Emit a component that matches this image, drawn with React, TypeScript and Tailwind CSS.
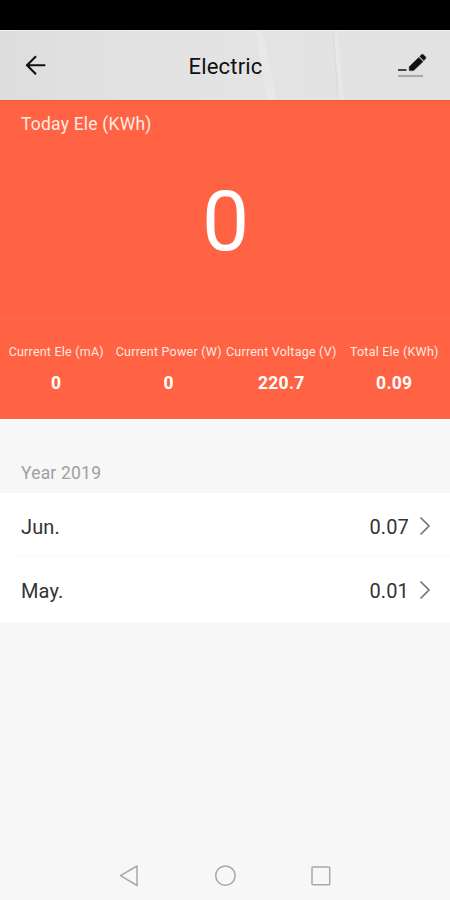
import React from 'react';

const stats = [
  { label: 'Current Ele (mA)', value: '0' },
  { label: 'Current Power (W)', value: '0' },
  { label: 'Current Voltage (V)', value: '220.7' },
  { label: 'Total Ele (KWh)', value: '0.09' },
];

const months = [
  { name: 'Jun.', value: '0.07' },
  { name: 'May.', value: '0.01' },
];

function Header() {
  return (
    <header className="relative flex h-[70px] items-center justify-between bg-[#e1e1e1] pl-[25px] pr-[23px]">
      <svg className="absolute inset-0" width="450" height="70" viewBox="0 0 450 70" fill="none">
        <defs>
          <linearGradient id="sheen" x1="0" x2="1" y1="0" y2="0">
            <stop offset="0" stopColor="#dddddd" />
            <stop offset="0.3" stopColor="#e2e2e2" />
            <stop offset="0.56" stopColor="#e3e3e3" />
            <stop offset="1" stopColor="#e2e2e2" />
          </linearGradient>
        </defs>
        <rect width="450" height="70" fill="url(#sheen)" />
        <path d="M255 0H262L277 70H267Z" fill="#e8e8e8" />
        <path d="M334 0H338L344 70H339Z" fill="#e7e7e7" />
        <path d="M333 0L338 70" stroke="#dadada" />
        <path d="M0 .5H450" stroke="#efefef" />
      </svg>
      <svg className="relative" width="21" height="20" viewBox="0 0 21 20" fill="none" stroke="#111" strokeWidth="2.1">
        <path d="M20.3 10.3H2M11 1.2L2 10.3L11 19.3" />
      </svg>
      <h1 className="relative -mr-[8px] mt-[4px] text-[22px] leading-[26px] tracking-[0.2px] text-[#111]">Electric</h1>
      <svg className="relative" width="30" height="26" viewBox="0 0 30 26">
        <path d="M1 18H9.5" stroke="#333" strokeWidth="1.8" />
        <path d="M1 24H26" stroke="#aaa" strokeWidth="2.2" />
        <path d="M12.3 18.6V14.7L21.8 5.4L26 9.6L16.6 18.6ZM22.8 4.4L24.6 2.6Q25.4 1.9 26.2 2.6L28.6 5Q29.3 5.8 28.6 6.6L26.9 8.6Z" fill="#111" stroke="#111" strokeWidth=".5" />
      </svg>
    </header>
  );
}

function Summary() {
  return (
    <section className="h-[319px] border-t border-[#ec5d3f] bg-[#ff6344] text-white">
      <div className="flex h-[217px] flex-col">
        <p className="ml-[21px] mt-[12px] text-[17.5px] leading-[22px] tracking-[0.2px] text-[#ffeae0]">Today Ele (KWh)</p>
        <p className="mt-[37px] pl-[1px] text-center text-[84px] leading-[100px]">0</p>
      </div>
      <div className="grid h-[101px] grid-cols-4 border-t border-[#ff6d4d]">
        {stats.map((stat) => (
          <div key={stat.label} className="flex flex-col items-center border-r border-[#fb6849] pt-[25px] last:border-r-0">
            <span className="whitespace-nowrap pl-[1px] text-[12.5px] leading-[16px] tracking-[0.22px] text-[#ffe9e0]">{stat.label}</span>
            <strong className="mt-[13px] pl-[1px] text-[17.5px] leading-[20px] tracking-[0.3px]">{stat.value}</strong>
          </div>
        ))}
      </div>
    </section>
  );
}

export default function App() {
  return (
    <main className="flex h-[900px] w-[450px] flex-col overflow-hidden bg-[#f7f7f7] font-['Roboto',sans-serif]">
      <div className="h-[30px] shrink-0 bg-black" />
      <Header />
      <Summary />
      <h2 className="h-[74px] border-t-2 border-white pl-[21px] pt-[41px] text-[17.5px] leading-[22px] tracking-[0.2px] text-[#a0a0a0]">Year 2019</h2>
      <ul className="bg-white">
        {months.map((month) => (
          <li key={month.name} className="ml-[15px] flex h-[64px] items-center border-b border-[#f8f8f8] pl-[6px] pr-[19px] text-[20px] tracking-[0.15px] text-[#333] last:h-[65px] last:border-b-0 last:pb-[2px]">
            <span className="mt-[4px] leading-[30px]">{month.name}</span>
            <span className="ml-auto mt-[4px] leading-[30px]">{month.value}</span>
            <svg className="ml-[10px] mt-[2px]" width="12" height="20" viewBox="0 0 12 20" fill="none" stroke="#777" strokeWidth="1.7">
              <path d="M1.5 1.5L10 10L1.5 18.5" />
            </svg>
          </li>
        ))}
      </ul>
      <nav className="mt-auto flex h-[49px] items-center justify-between pl-[119px] pr-[119px]">
        <svg width="20" height="24" viewBox="0 0 20 24" fill="none" stroke="#a8a8a8" strokeWidth="1.5" strokeLinejoin="round">
          <path d="M18 2V21.5L1.5 11.7Z" />
        </svg>
        <svg width="22" height="22" viewBox="0 0 22 22" fill="none" stroke="#a8a8a8" strokeWidth="1.5">
          <circle cx="11.4" cy="10.6" r="9.7" />
        </svg>
        <svg width="20" height="20" viewBox="0 0 20 20" fill="none" stroke="#a8a8a8" strokeWidth="1.5">
          <rect x="1" y="1" width="17.7" height="17.7" rx="1" />
        </svg>
      </nav>
    </main>
  );
}
